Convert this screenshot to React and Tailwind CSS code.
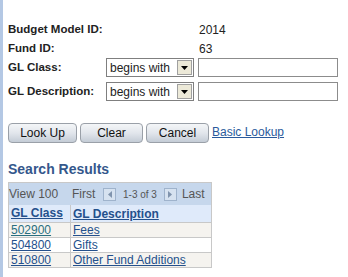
import React from 'react';

const rows = [
  { cls: '502900', desc: 'Fees', visited: true },
  { cls: '504800', desc: 'Gifts' },
  { cls: '510800', desc: 'Other Fund Additions' },
];

const Select = () => (
  <div className="flex h-[19px] w-[88px] items-center border border-[#7f7f7f] bg-white">
    <span className="flex-1 pl-[3px] text-[12px] text-[#222]">begins with</span>
    <span className="flex h-[15px] w-[15px] items-center justify-center border border-[#a0a0a0] bg-[#ece9d8] mr-[1px]">
      <svg width="7" height="4" viewBox="0 0 7 4"><path d="M0 0h7L3.5 4z" fill="#000" /></svg>
    </span>
  </div>
);

const Btn = ({ children, w }) => (
  <button className={`h-[20px] ${w} rounded-[4px] border border-[#9aa0a8] bg-gradient-to-b from-[#f4f6f8] via-[#e2e6ec] to-[#c4ccd6] text-[12px] text-[#111]`}>
    {children}
  </button>
);

const Arrow = ({ dir }) => (
  <span className="flex h-[13px] w-[13px] items-center justify-center border border-[#9fb3cc] bg-[#d6e2f0]">
    <svg width="4" height="7" viewBox="0 0 4 7">
      {dir === 'left' ? <path d="M4 0v7L0 3.5z" fill="#7f93ad" /> : <path d="M0 0v7l4-3.5z" fill="#7f93ad" />}
    </svg>
  </span>
);

export default function App() {
  return (
    <div className="flex min-h-[277px] bg-white font-['Liberation_Sans',Arial,sans-serif] text-[12px] text-[#222]">
      <div className="w-[3px] bg-[#b4c8e4]" />
      <div className="pl-[5px] pt-[21px]">
        {/* search criteria */}
        <div className="flex h-[17px] items-center">
          <span className="w-[191px] text-[11.5px] font-bold">Budget Model ID:</span>
          <span>2014</span>
        </div>
        <div className="mt-[2px] flex h-[17px] items-center">
          <span className="w-[191px] text-[11.5px] font-bold">Fund ID:</span>
          <span>63</span>
        </div>
        <div className="mt-[1px] flex h-[19px] items-center">
          <span className="w-[98px] text-[11.5px] font-bold">GL Class:</span>
          <Select />
          <input className="ml-[4px] h-[19px] w-[140px] border border-[#8c8c8c] bg-white" />
        </div>
        <div className="mt-[5px] flex h-[19px] items-center">
          <span className="w-[98px] text-[11.5px] font-bold">GL Description:</span>
          <Select />
          <input className="ml-[4px] h-[19px] w-[140px] border border-[#8c8c8c] bg-white" />
        </div>

        {/* buttons */}
        <div className="mt-[22px] flex items-end gap-[3px]">
          <Btn w="w-[69px]">Look Up</Btn>
          <Btn w="w-[63px]">Clear</Btn>
          <Btn w="w-[63px]">Cancel</Btn>
          <a className="mb-[2px] text-[12px] text-[#2a5a9c] underline">Basic Lookup</a>
        </div>

        {/* results */}
        <div className="mt-[16px] text-[14px] font-bold text-[#34578c]">Search Results</div>
        <div className="mt-[2px] w-[204px] border border-[#c8c8c8]">
          <div className="flex h-[22px] items-center bg-[#c6d7ec] text-[12px] text-[#555]">
            <span className="w-[63px]">View 100</span>
            <span className="w-[31px]">First</span>
            <Arrow dir="left" />
            <span className="mx-[7px] text-[10px]">1-3 of 3</span>
            <Arrow dir="right" />
            <span className="ml-[5px]">Last</span>
          </div>
          <div className="flex h-[17px] items-center bg-[#dfeafa] font-bold text-[#24508c] underline">
            <span className="h-full w-[62px] border-r border-[#c8c8c8] pl-[2px] leading-[17px]">GL Class</span>
            <span className="pl-[2px]">GL Description</span>
          </div>
          {rows.map((r, i) => (
            <div key={r.cls} className={`flex h-[15px] items-center border-t border-[#c8c8c8] ${i % 2 === 0 ? 'bg-[#f5f3ef]' : 'bg-white'}`}>
              <a className={`h-full w-[62px] border-r border-[#c8c8c8] pl-[2px] leading-[14px] underline ${r.visited ? 'text-[#2a6f80]' : 'text-[#24508c]'}`}>{r.cls}</a>
              <a className="pl-[2px] text-[#24508c] underline">{r.desc}</a>
            </div>
          ))}
        </div>
      </div>
    </div>
  );
}
